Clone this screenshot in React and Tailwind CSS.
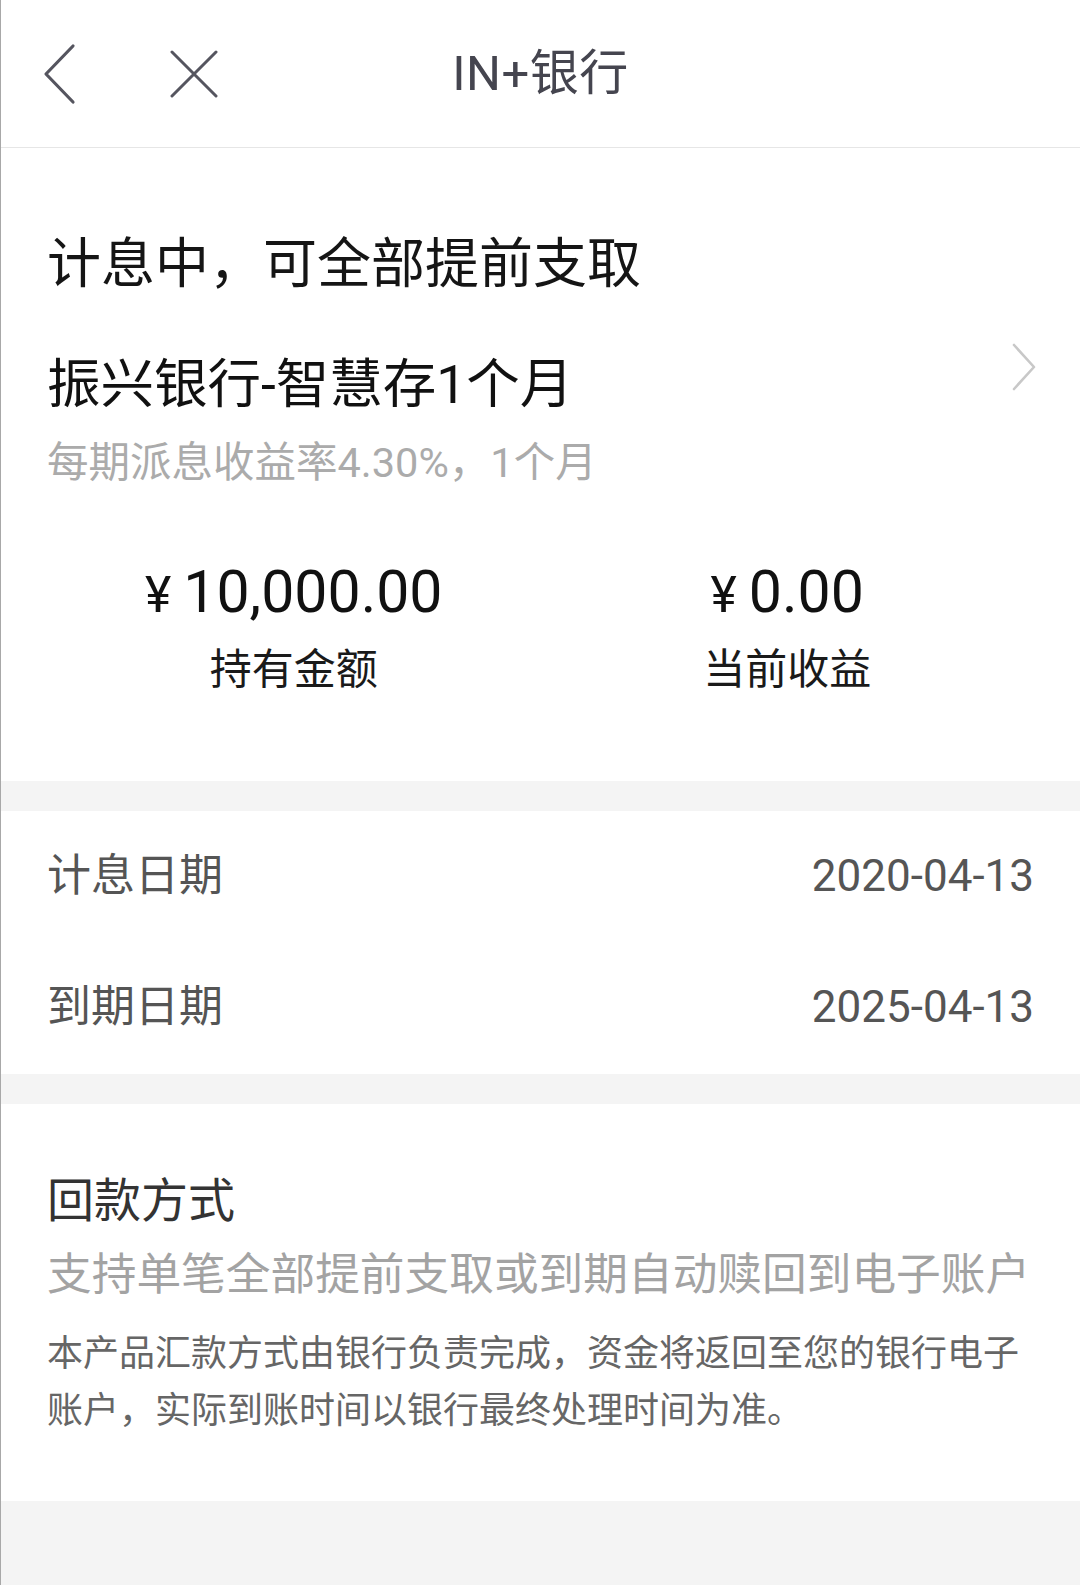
import React from "react";

const FONT = { fontFamily: 'Roboto, "Noto Sans CJK SC", sans-serif' };

function BackIcon() {
  return (
    <svg width="34" height="62" viewBox="0 0 34 62" fill="none">
      <path d="M31 3 L4 31 L31 59" stroke="#55555f" strokeWidth="3.2" strokeLinecap="round" strokeLinejoin="round" />
    </svg>
  );
}

function CloseIcon() {
  return (
    <svg width="48" height="48" viewBox="0 0 48 48" fill="none">
      <path d="M2 2 L46 46 M46 2 L2 46" stroke="#55555f" strokeWidth="3" strokeLinecap="round" />
    </svg>
  );
}

function ChevronRight() {
  return (
    <svg width="26" height="48" viewBox="0 0 26 48" fill="none">
      <path d="M3 2 L23 24 L3 46" stroke="#c8c8c8" strokeWidth="2.6" strokeLinecap="round" strokeLinejoin="round" />
    </svg>
  );
}

export default function App() {
  return (
    <div style={FONT} className="w-[1080px] min-h-[1585px] bg-[#f4f4f4] border-l border-[#a8a8a8]">
      {/* Header */}
      <header className="h-[148px] bg-white border-b border-[#e6e6e6] grid grid-cols-[1fr_auto_1fr] items-center">
        <div className="flex items-center pl-[41px]">
          <BackIcon />
          <div className="ml-[94px] mt-[1px]">
            <CloseIcon />
          </div>
        </div>
        <div className="text-[49px] leading-none text-[#45454f] tracking-[0.5px]">IN+银行</div>
        <div />
      </header>

      {/* Section 1 */}
      <section className="bg-white px-[46px] pt-[90px] pb-[90px]">
        <h1 className="text-[54px] leading-none text-[#151515] font-normal">计息中，可全部提前支取</h1>
        <div className="flex justify-between items-start mt-[66px]">
          <div className="text-[53.5px] leading-none text-[#111]">振兴银行-智慧存1个月</div>
          <div className="-mt-[15px] -mr-[3px]">
            <ChevronRight />
          </div>
        </div>
        <div className="mt-[30px] text-[41.5px] leading-none text-[#ababab]">每期派息收益率4.30%，1个月</div>

        <div className="grid grid-cols-2 mt-[79px]">
          <div className="flex flex-col items-center">
            <div className="text-[59px] leading-none text-[#111] flex items-baseline">
              <span className="text-[50px]">¥</span>
              <span className="ml-[12px]">10,000.00</span>
            </div>
            <div className="mt-[28px] text-[42px] leading-none text-[#1a1a1a]">持有金额</div>
          </div>
          <div className="flex flex-col items-center">
            <div className="text-[59px] leading-none text-[#111] flex items-baseline">
              <span className="text-[50px]">¥</span>
              <span className="ml-[12px]">0.00</span>
            </div>
            <div className="mt-[28px] text-[42px] leading-none text-[#1a1a1a]">当前收益</div>
          </div>
        </div>
      </section>

      <div className="h-[30px]" />

      {/* Section 2 */}
      <section className="bg-white px-[46px] pt-[43px] pb-[45px]">
        <div className="flex justify-between items-center h-[44px]">
          <span className="text-[44px] leading-none text-[#555]">计息日期</span>
          <span className="text-[44px] leading-none text-[#555]">2020-04-13</span>
        </div>
        <div className="flex justify-between items-center h-[44px] mt-[87px]">
          <span className="text-[44px] leading-none text-[#555]">到期日期</span>
          <span className="text-[44px] leading-none text-[#555]">2025-04-13</span>
        </div>
      </section>

      <div className="h-[30px]" />

      {/* Section 3 */}
      <section className="bg-white px-[46px] pt-[73px] pb-[61px]">
        <div className="text-[47px] leading-none text-[#333]">回款方式</div>
        <div className="mt-[29px] text-[44.7px] leading-none text-[#a3a3a3] whitespace-nowrap">
          支持单笔全部提前支取或到期自动赎回到电子账户
        </div>
        <p className="mt-[28px] text-[36px] leading-[57px] text-[#666]">
          本产品汇款方式由银行负责完成，资金将返回至您的银行电子账户，实际到账时间以银行最终处理时间为准。
        </p>
      </section>
    </div>
  );
}
